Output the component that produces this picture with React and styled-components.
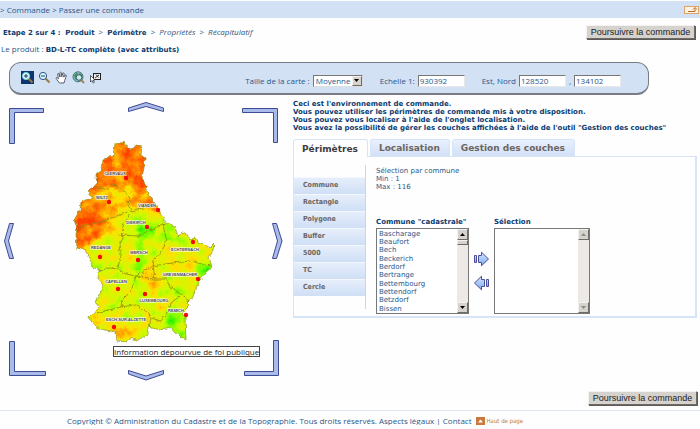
import styled, { createGlobalStyle, css } from 'styled-components';

const color = {
	text: '#2a5788',
	strong: '#0a3b70',
	tab: '#6c6560',
	bar: '#d3e1f5',
	line: '#d6e4f7',
	arrow: '#a9bbe8',
	arrowBorder: '#3f4a94',
};

const wide = "'DejaVu Sans', Verdana, sans-serif";

const GlobalStyle = createGlobalStyle`
	* {
		box-sizing: border-box;
	}
	body {
		margin: 0;
		background: #fefefe;
		color: ${color.text};
		font-family: 'Open Sans', sans-serif;
		font-size: 8px;
		line-height: 8px;
	}
	a {
		color: inherit;
		text-decoration: none;
	}
`;

const bevel = css`
	border: 1px solid;
	border-color: #f4f2ee #6e6a66 #6e6a66 #f4f2ee;
	background: #d6d2cd;
`;

const strongText = css`
	color: ${color.strong};
	font-family: ${wide};
	font-size: 7px;
	font-weight: bold;
`;

const Breadcrumb = styled.nav`
	display: flex;
	align-items: center;
	justify-content: space-between;
	height: 17px;
	margin-top: 1px;
	padding: 0 1px 0 0;
	background: ${color.bar};
`;

const BackButton = styled.button`
	display: flex;
	width: 15px;
	height: 8px;
	padding: 0;
	border: 1px solid #e0a468;
	background: #fdf3e4;
`;

const StepRow = styled.div`
	display: flex;
	align-items: center;
	justify-content: space-between;
	margin-top: 7px;
	padding: 0 5px 0 3px;
`;

const Steps = styled.p`
	margin: 0;
	b {
		${strongText}
	}
	span {
		margin: 0 2px;
	}
`;

const OrderButton = styled.button`
	${bevel}
	width: 109px;
	height: 14px;
	padding: 0;
	box-shadow: 1px 1px 0 #5d5a58;
	color: #222;
	font-family: 'Liberation Sans', Arial, sans-serif;
	font-size: 9px;
	line-height: 12px;
`;

const Product = styled.p`
	margin: 6px 0 0 1px;
	b {
		${strongText}
	}
`;

const Toolbar = styled.div`
	display: flex;
	align-items: center;
	justify-content: space-between;
	height: 33px;
	margin: 8px 51px 0 9px;
	padding: 0 27px 0 11px;
	border: 1px solid #777c85;
	border-bottom-width: 2px;
	border-radius: 12px;
	background: ${color.bar};
`;

const ToolList = styled.div`
	display: flex;
	align-items: center;
	gap: 4px;
	padding-bottom: 2px;
`;

const Tool = styled.button`
	display: flex;
	width: 13px;
	height: 13px;
	padding: 0;
	border: none;
	background: ${(props) => (props.$active ? '#0d3570' : 'transparent')};
`;

const ToolForm = styled.form`
	display: flex;
	align-items: center;
	gap: 17px;
	padding-top: 5px;
`;

const Field = styled.div`
	display: flex;
	align-items: center;
	gap: 3px;
`;

const SelectBox = styled.div`
	position: relative;
`;

const SizeSelect = styled.select`
	appearance: none;
	display: block;
	width: 50px;
	height: 12px;
	padding: 0 0 0 2px;
	border: 1px solid;
	border-color: #777 #ddd #ddd #777;
	border-radius: 0;
	background: #fff;
	color: ${color.text};
	font: inherit;
`;

const SelectArrow = styled.span`
	${bevel}
	position: absolute;
	top: 1px;
	right: 1px;
	display: flex;
	align-items: center;
	justify-content: center;
	width: 10px;
	height: 10px;
	color: #000;
	pointer-events: none;
`;

const TextInput = styled.input`
	width: 47px;
	height: 12px;
	padding: 0 1px;
	border: 1px solid;
	border-color: #777 #e8e8e8 #e8e8e8 #777;
	background: #fff;
	color: ${color.text};
	font: inherit;
`;

const Main = styled.main`
	display: flex;
	align-items: flex-start;
	margin-top: 3px;
`;

const MapArea = styled.figure`
	position: relative;
	flex: none;
	width: 293px;
	margin: 0;
	svg {
		display: block;
	}
`;

const MapNotice = styled.figcaption`
	position: absolute;
	left: 113px;
	top: 248px;
	border: 1px solid #444;
	background: #fff;
	color: #222;
	line-height: 9px;
	white-space: nowrap;
`;

const Side = styled.section`
	flex: 1;
	padding: 2px 3px 0 0;
`;

const Intro = styled.p`
	${strongText}
	margin: 0 0 7px;
	white-space: nowrap;
`;

const TabList = styled.div`
	display: flex;
	gap: 2px;
`;

const Tab = styled.button`
	height: 17px;
	padding: 0 9px 0 8px;
	border: 1px solid ${color.line};
	border-bottom: none;
	border-radius: 3px 3px 0 0;
	background: linear-gradient(#e9f0fc, #d2e0f6);
	color: ${color.tab};
	font-family: ${wide};
	font-size: 9px;
	font-weight: bold;
	line-height: 16px;
	${(props) =>
		props.$active &&
		css`
			z-index: 1;
			margin-bottom: -1px;
			height: 18px;
			background: #fefefe;
			color: #3c3c42;
		`}
`;

const Panel = styled.div`
	display: flex;
	border: 2px solid ${color.line};
	border-top-width: 1px;
	border-left-width: 1px;
`;

const Menu = styled.ul`
	flex: none;
	width: 72px;
	margin: 8px 0 7px;
	padding: 12px 0 11px;
	border-right: 1px solid #c0d8f5;
	list-style: none;
`;

const MenuItem = styled.a`
	display: block;
	height: 17px;
	padding-left: 9px;
	border-top: 1px solid #f4f8fe;
	background: linear-gradient(#e6eefb, #cfdff5);
	color: ${color.tab};
	font-family: 'DejaVu Sans Condensed', 'DejaVu Sans', sans-serif;
	font-size: 7px;
	font-weight: bold;
	line-height: 15px;
`;

const Content = styled.div`
	flex: 1;
	padding: 10px 0 2px 10px;
`;

const Summary = styled.p`
	margin: 0 0 27px;
	font-family: ${wide};
	font-size: 7px;
`;

const Picker = styled.div`
	display: flex;
	align-items: flex-end;
	gap: 4px;
`;

const ListField = styled.div`
	label {
		${strongText}
		display: block;
		margin-bottom: 2px;
		white-space: nowrap;
	}
`;

const ListFrame = styled.div`
	display: flex;
	width: ${(props) => props.$width}px;
	height: 86px;
	border: 1px solid #777;
`;

const ListBox = styled.select`
	flex: 1;
	min-width: 0;
	height: 84px;
	padding: 1px 0 0;
	border: none;
	border-radius: 0;
	background: #fff;
	overflow: hidden;
	color: ${color.text};
	font-family: ${wide};
	font-size: 7px;
	option {
		min-height: 8px;
		padding: 0 2px;
	}
	option:nth-child(3n) {
		padding-bottom: 1px;
	}
`;

const Scrollbar = styled.div`
	display: flex;
	flex-direction: column;
	width: 11px;
	background: #ece9e6;
`;

const ScrollButton = styled.span`
	${bevel}
	display: flex;
	align-items: center;
	justify-content: center;
	height: 11px;
	color: ${(props) => (props.$disabled ? '#8d8985' : '#000')};
`;

const Thumb = styled.span`
	${bevel}
	height: 5px;
`;

const Track = styled.span`
	flex: 1;
`;

const Transfer = styled.div`
	display: flex;
	flex-direction: column;
	gap: 8px;
	padding-bottom: 23px;
`;

const TransferButton = styled.button`
	display: flex;
	width: 17px;
	height: 16px;
	padding: 0;
	border: none;
	background: none;
`;

const BottomRow = styled.div`
	display: flex;
	justify-content: flex-end;
	margin-top: 8px;
	padding-right: 3px;
`;

const Footer = styled.footer`
	display: flex;
	align-items: center;
	gap: 4px;
	margin-top: 5px;
	padding: 6px 0 0 67px;
	border-top: 1px solid #e1e7f5;
`;

const TopLink = styled.a`
	display: flex;
	align-items: center;
	gap: 2px;
	color: #c07a45;
	font-family: 'DejaVu Sans Condensed', 'DejaVu Sans', sans-serif;
	font-size: 6px;
`;

const Triangle = ({ up }) => (
	<svg width="5" height="3" viewBox="0 0 5 3">
		<path d={up ? 'M0 3L2.5 0L5 3Z' : 'M0 0L2.5 3L5 0Z'} fill="currentColor" />
	</svg>
);

const Magnifier = ({ sign, lens = '#d9fbff', rim = '#2d4f84' }) => (
	<svg width="13" height="13" viewBox="0 0 13 13">
		<path d="M7.5 7.5L11.5 11.5" stroke="#9a7a3c" strokeWidth="2" />
		<circle cx="5" cy="5" r="3.6" fill={lens} stroke={rim} />
		<path d={sign} stroke="#16396f" strokeWidth="1" />
	</svg>
);

const HandIcon = () => (
	<svg width="13" height="13" viewBox="0 0 13 13">
		<path
			d="M4.5 12L2 8.8Q.5 7 1.5 6.6Q2.4 6.5 3.5 7.8L2.6 3Q3 1.8 3.9 2.8L5 6L4.9 1.6Q5.5.6 6.3 1.6L6.8 5.7L7.8 2Q8.7 1.3 9.1 2.4L8.7 6.2L10.3 3.9Q11.4 3.5 11.3 4.8L9.7 9.5L9 12Z"
			fill="#fff"
			stroke="#333b4b"
			strokeWidth=".8"
		/>
	</svg>
);

const GlobeIcon = () => (
	<svg width="13" height="13" viewBox="0 0 13 13">
		<circle cx="6" cy="5.8" r="5" fill="#8fc1d8" stroke="#42757a" />
		<path d="M2 4L5 1.5L6 3L4 5L5 8L3.5 9ZM7 2L10 3.5L10.5 7L8 8Z" fill="#3f9447" />
		<circle cx="7" cy="6.5" r="2.8" fill="#cceef1" stroke="#395d62" />
		<path d="M9 8.7L12 12" stroke="#9a7a3c" strokeWidth="1.8" />
	</svg>
);

const AreaIcon = () => (
	<svg width="13" height="13" viewBox="0 0 13 13">
		<rect x="4.5" y="2.5" width="7" height="6" fill="#eee" stroke="#222" />
		<path d="M6 7L10 4M7 3.5L9.5 6.5" stroke="#333" />
		<path d="M1.5 4.5V11L3 9.5L4.2 12L5.3 11.3L4.2 9H6Z" fill="#fff" stroke="#222" strokeWidth=".7" />
	</svg>
);

const TransferIcon = ({ left }) => (
	<svg width="17" height="16" viewBox="0 0 17 16">
		<defs>
			<linearGradient id="arrowFill" x2="0" y2="1">
				<stop offset="0" stopColor="#d5e6ff" />
				<stop offset="1" stopColor="#7da8ee" />
			</linearGradient>
		</defs>
		<g
			transform={left ? 'translate(17 0) scale(-1 1)' : undefined}
			fill="url(#arrowFill)"
			stroke="#4a5096"
		>
			<path d="M5.500 4.500H8.500V1.200L15.500 8L8.500 14.800V11.500H5.500Z" />
			<path d="M1.500 4.500H3.500V11.500H1.500Z" />
		</g>
	</svg>
);

const cities = [
	['CLERVAUX', 115, 175, 126, 178],
	['WILTZ', 102, 199, 109, 202],
	['VIANDEN', 147, 207, 158, 210],
	['DIEKIRCH', 136, 224, 147, 227],
	['REDANGE', 101, 249, 100, 257],
	['MERSCH', 139, 254, 138, 260],
	['ECHTERNACH', 185, 251, 193, 242],
	['CAPELLEN', 116, 283, 118, 289],
	['GREVENMACHER', 180, 276, 198, 279],
	['LUXEMBOURG', 154, 302, 145, 294],
	['REMICH', 176, 312, 186, 315],
	['ESCH-SUR-ALZETTE', 126, 321, 114, 327],
];

const country =
	'M115 144L125 142L127 147L131 149L134 148L135 145L142 147L141 155L145 158L144 168L142 178L146 185L148 195L154 201L160 212L165 222L175 227L178 237L182 232L186 233L191 240L195 238L198 243L211 248L213 243L214 250L209 257L212 267L205 273L200 280L195 290L193 297L187 302L188 307L183 312L185 318L186 339L175 333L170 327L160 330L148 327L148 335L137 340L130 338L127 342L117 341L116 332L100 329L95 325L88 316L95 313L99 307L95 302L100 293L103 285L97 278L100 270L92 267L90 258L85 250L77 248L76 235L77 228L74 220L80 210L81 202L92 198L88 190L97 185L96 175L102 170L103 160L113 156Z';

const borders =
	'M97 187L108 190L112 184L122 190L130 197L128 205L132 212M128 212L117 216L100 222L88 225L76 229M132 212L143 208L156 205M130 214L122 227L123 238L119 246M119 235L138 236L152 229L166 224M119 246L121 255L118 267L122 273L136 276L146 270L153 265M98 271L110 268L118 269M163 224L166 238L163 250L154 260L153 266L172 263L190 261L210 266M136 276L131 291L122 300L121 307L105 311L97 314M136 276L153 279L166 279L170 287L178 292L189 301M121 307L134 305L146 311L151 318L161 321L169 311L171 303L180 296M151 318L149 328M153 266L155 279';

const LuxMap = () => (
	<svg width="290" height="285" viewBox="0 98 290 285">
		<defs>
			<clipPath id="country">
				<path d={country} />
			</clipPath>
			<filter id="terrain" filterUnits="userSpaceOnUse" x="60" y="130" width="170" height="225" colorInterpolationFilters="sRGB">
				<feGaussianBlur in="SourceGraphic" stdDeviation="4" result="height" />
				<feTurbulence type="fractalNoise" baseFrequency=".08" numOctaves="5" seed="8" />
				<feColorMatrix values="1 0 0 0 0 1 0 0 0 0 1 0 0 0 0 0 0 0 0 1" result="noise" />
				<feComposite in="height" in2="noise" operator="arithmetic" k2="1" k3=".65" k4="-.31" />
				<feComponentTransfer>
					<feFuncR type="table" tableValues="0 .45 .82 1 1 1" />
					<feFuncG type="table" tableValues=".9 1 .98 .88 .55 .25" />
					<feFuncB type="table" tableValues="0 0" />
				</feComponentTransfer>
			</filter>
			<filter id="rough" filterUnits="userSpaceOnUse" x="60" y="130" width="170" height="225" colorInterpolationFilters="sRGB">
				<feTurbulence type="fractalNoise" baseFrequency=".25" numOctaves="2" seed="3" />
				<feDisplacementMap in="SourceGraphic" scale="4" xChannelSelector="R" yChannelSelector="G" />
			</filter>
		</defs>

		<g filter="url(#rough)">
			<g clipPath="url(#country)">
				<g filter="url(#terrain)">
					<rect x="50" y="120" width="190" height="245" fill="#727272" />
					<path d="M50 120H170V210L125 210L110 222L108 234L80 250H50Z" fill="#d6d6d6" />
					<path d="M100 190L128 184L136 206L122 212L94 212Z" fill="#a0a0a0" />
					<path d="M60 214L118 216L100 232L80 248H60Z" fill="#e6e6e6" />
					<path d="M128 205L137 212L160 232L180 238L155 240L128 226Z" fill="#333" />
					<path d="M136 225H143V300H134ZM165 222L180 240L158 238ZM200 262L214 262L196 295L178 340H188ZM168 305H190V342L168 325Z" fill="#303030" />
					<path d="M142 268L158 268L155 292L140 288ZM160 245L190 256L200 266L172 262ZM86 312L110 324L145 330L125 345L100 330Z" fill="#a4a4a4" />
				</g>
			</g>
			<path d={country} fill="none" stroke="#8d9418" strokeWidth=".7" />
			<path d={borders} fill="none" stroke="#8a8a16" strokeWidth=".8" />
		</g>

		<g fontFamily="Liberation Sans, sans-serif" fontSize="4" fontWeight="bold" textAnchor="middle">
			{cities.map(([name, x, y, dotX, dotY]) => (
				<g key={name}>
					<circle cx={dotX} cy={dotY} r="2.2" fill="#f40b0b" />
					<text x={x} y={y} fill="#444" stroke="#fff" strokeWidth="1" paintOrder="stroke">
						{name}
					</text>
				</g>
			))}
		</g>

		<g fill={color.arrow} stroke={color.arrowBorder}>
			<path d="M9.500 108.500H43.500V112.500H14.500V143.500H9.500Z" />
			<path d="M242.500 108.500H277.500V142.500H273.500V112.500H242.500Z" />
			<path d="M9.500 341.500H14.500V371.500H45.500V375.500H9.500Z" />
			<path d="M273.500 340.500H278.500V375.500H244.500V371.500H273.500Z" />
			<path d="M128.500 108L146 102.500L163.500 108V111.500L146 106.500L128.500 111.500Z" />
			<path d="M128.500 370.500L146 376L163.500 370.500V374L146 380L128.500 374Z" />
			<path d="M9.500 223.500H13.500L8.500 241L13.500 258.500H9.500L4.500 241Z" />
			<path d="M272.500 223.500H276.500L282 241L276.500 258.500H272.500L277.500 241Z" />
		</g>
	</svg>
);

const communes = [
	'Bascharage',
	'Beaufort',
	'Bech',
	'Beckerich',
	'Berdorf',
	'Bertrange',
	'Bettembourg',
	'Bettendorf',
	'Betzdorf',
	'Bissen',
];

const perimeters = ['Commune', 'Rectangle', 'Polygone', 'Buffer', '5000', 'TC', 'Cercle'];

const ScrollList = ({ id, label, width, items, disabled }) => (
	<ListField>
		<label htmlFor={id}>{label}</label>
		<ListFrame $width={width}>
			<ListBox id={id} size={10} multiple>
				{items.map((item) => (
					<option key={item}>{item}</option>
				))}
			</ListBox>
			<Scrollbar aria-hidden="true">
				<ScrollButton $disabled={disabled}>
					<Triangle up />
				</ScrollButton>
				{!disabled && <Thumb />}
				<Track />
				<ScrollButton $disabled={disabled}>
					<Triangle />
				</ScrollButton>
			</Scrollbar>
		</ListFrame>
	</ListField>
);

const App = () => {
	return (
		<>
			<GlobalStyle />
			<Breadcrumb>
				<div>
					&gt; <a href="#commande">Commande</a> &gt; <a href="#passer">Passer une commande</a>
				</div>
				<BackButton aria-label="Retour">
					<svg width="13" height="6" viewBox="0 0 13 6">
						<path d="M3 4.500H10V1.500M8 2.500L10 .5L12 2.500" fill="none" stroke="#b06a2c" />
					</svg>
				</BackButton>
			</Breadcrumb>

			<StepRow>
				<Steps>
					<b>Etape 2 sur 4 :&nbsp; Produit</b> <span>&gt;</span> <b>Périmètre</b> <span>&gt;</span>{' '}
					<i>Propriétés</i> <span>&gt;</span> <i>Récapitulatif</i>
				</Steps>
				<OrderButton>Poursuivre la commande</OrderButton>
			</StepRow>
			<Product>
				Le produit : <b>BD-L-TC complète (avec attributs)</b>
			</Product>

			<Toolbar>
				<ToolList>
					<Tool $active aria-label="Zoom avant">
						<Magnifier sign="M3 5H7M5 3V7" rim="#7fd0d8" />
					</Tool>
					<Tool aria-label="Zoom arrière">
						<Magnifier sign="M3 5H7" />
					</Tool>
					<Tool aria-label="Déplacer">
						<HandIcon />
					</Tool>
					<Tool aria-label="Vue globale">
						<GlobeIcon />
					</Tool>
					<Tool aria-label="Sélectionner">
						<AreaIcon />
					</Tool>
				</ToolList>
				<ToolForm>
					<Field>
						<label htmlFor="taille">Taille de la carte :</label>
						<SelectBox>
							<SizeSelect id="taille">
								<option>Moyenne</option>
							</SizeSelect>
							<SelectArrow>
								<Triangle />
							</SelectArrow>
						</SelectBox>
					</Field>
					<Field>
						<label htmlFor="echelle">Echelle 1:</label>
						<TextInput id="echelle" defaultValue="930392" />
					</Field>
					<Field>
						<label htmlFor="est">Est, Nord</label>
						<TextInput id="est" defaultValue="128520" />
						<label htmlFor="nord">,</label>
						<TextInput id="nord" defaultValue="134102" />
					</Field>
				</ToolForm>
			</Toolbar>

			<Main>
				<MapArea>
					<LuxMap />
					<MapNotice>Information dépourvue de foi publique</MapNotice>
				</MapArea>
				<Side>
					<Intro>
						Ceci est l'environnement de commande.
						<br />
						Vous pouvez utiliser les périmètres de commande mis à votre disposition.
						<br />
						Vous pouvez vous localiser à l'aide de l'onglet localisation.
						<br />
						Vous avez la possibilité de gérer les couches affichées à l'aide de l'outil "Gestion des
						couches"
					</Intro>
					<TabList>
						<Tab $active>Périmètres</Tab>
						<Tab>Localisation</Tab>
						<Tab>Gestion des couches</Tab>
					</TabList>
					<Panel>
						<Menu>
							{perimeters.map((name) => (
								<li key={name}>
									<MenuItem href={`#${name}`}>{name}</MenuItem>
								</li>
							))}
						</Menu>
						<Content>
							<Summary>
								Sélection par commune
								<br />
								Min : 1
								<br />
								Max : 116
							</Summary>
							<Picker>
								<ScrollList id="communes" label={'Commune "cadastrale"'} width={93} items={communes} />
								<Transfer>
									<TransferButton aria-label="Ajouter">
										<TransferIcon />
									</TransferButton>
									<TransferButton aria-label="Retirer">
										<TransferIcon left />
									</TransferButton>
								</Transfer>
								<ScrollList id="selection" label="Sélection" width={96} items={[]} disabled />
							</Picker>
						</Content>
					</Panel>
				</Side>
			</Main>

			<BottomRow>
				<OrderButton>Poursuivre la commande</OrderButton>
			</BottomRow>
			<Footer>
				<div>
					Copyright © Administration du Cadastre et de la Topographie. Tous droits réservés.{' '}
					<a href="#aspects">Aspects légaux</a> | <a href="#contact">Contact</a>
				</div>
				<TopLink href="#root">
					<svg width="9" height="8" viewBox="0 0 9 8">
						<rect width="9" height="8" fill="#c9793c" />
						<path d="M2 5.500L4.500 2.500L7 5.500Z" fill="#fff" />
					</svg>
					Haut de page
				</TopLink>
			</Footer>
		</>
	);
};

export default App;
